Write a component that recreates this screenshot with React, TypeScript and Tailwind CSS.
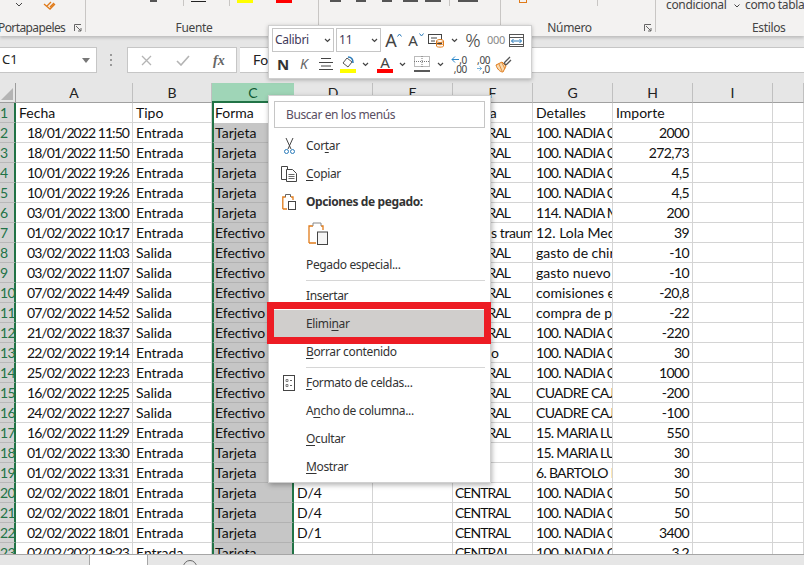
import React from "react";

const rows: string[][] = [
  ["Fecha", "Tipo", "Forma", "", "", "Tienda", "Detalles", "Importe"],
  ["18/01/2022 11:50", "Entrada", "Tarjeta", "", "", "CENTRAL", "100. NADIA C", "2000"],
  ["18/01/2022 11:50", "Entrada", "Tarjeta", "", "", "CENTRAL", "100. NADIA C", "272,73"],
  ["10/01/2022 19:26", "Entrada", "Tarjeta", "", "", "CENTRAL", "100. NADIA C", "4,5"],
  ["10/01/2022 19:26", "Entrada", "Tarjeta", "", "", "CENTRAL", "100. NADIA C", "4,5"],
  ["03/01/2022 13:00", "Entrada", "Tarjeta", "", "", "CENTRAL", "114. NADIA M", "200"],
  ["01/02/2022 10:17", "Entrada", "Efectivo", "", "", "", "12. Lola Med", "39"],
  ["03/02/2022 11:03", "Salida", "Efectivo", "", "", "CENTRAL", "gasto de chir", "-10"],
  ["03/02/2022 11:07", "Salida", "Efectivo", "", "", "CENTRAL", "gasto nuevo", "-10"],
  ["07/02/2022 14:49", "Salida", "Efectivo", "", "", "CENTRAL", "comisiones e", "-20,8"],
  ["07/02/2022 14:52", "Salida", "Efectivo", "", "", "CENTRAL", "compra de p", "-22"],
  ["21/02/2022 18:37", "Salida", "Efectivo", "", "", "CENTRAL", "100. NADIA C", "-220"],
  ["22/02/2022 19:14", "Entrada", "Efectivo", "", "", "", "100. NADIA C", "30"],
  ["25/02/2022 12:23", "Entrada", "Efectivo", "", "", "CENTRAL", "100. NADIA C", "1000"],
  ["16/02/2022 12:25", "Salida", "Efectivo", "", "", "CENTRAL", "CUADRE CAJA", "-200"],
  ["24/02/2022 12:27", "Salida", "Efectivo", "", "", "CENTRAL", "CUADRE CAJA", "-100"],
  ["16/02/2022 11:29", "Entrada", "Efectivo", "", "", "CENTRAL", "15. MARIA LU", "550"],
  ["01/02/2022 13:30", "Entrada", "Tarjeta", "", "", "", "15. MARIA LU", "30"],
  ["01/02/2022 13:31", "Entrada", "Tarjeta", "", "", "", "6. BARTOLO I", "30"],
  ["02/02/2022 18:01", "Entrada", "Tarjeta", "D/4", "", "CENTRAL", "100. NADIA C", "50"],
  ["02/02/2022 18:01", "Entrada", "Tarjeta", "D/4", "", "CENTRAL", "100. NADIA C", "50"],
  ["02/02/2022 18:01", "Entrada", "Tarjeta", "D/1", "", "CENTRAL", "100. NADIA C", "3400"],
  ["02/02/2022 19:23", "Entrada", "Tarjeta", "", "", "CENTRAL", "100. NADIA C", "3,2"],
];

const colHeaders = ["A", "B", "C", "D", "E", "F", "G", "H", "I", ""];

const cell = "h-5 border-r border-b border-[#d4d4d4] overflow-hidden whitespace-nowrap leading-[20px] text-[14px] text-[#111]";

const cellClass = (i: number, j: number, v: string) => {
  let c = cell;
  if (j === 0 && i > 0) c += " text-right pr-[3px] tracking-[-0.95px]";
  else if (j === 7 && i > 0) c += " text-right pr-[3px] tracking-[-0.6px]";
  else if (j === 5) c += " pl-[2px]";
  else c += " pl-[3px]";
  if (j === 5 && i > 0) c += " tracking-[-1px]";
  if (j === 6 && /[A-Z]{2}/.test(v)) c += " tracking-[-0.7px]";
  return c;
};

const Sheet = () => (
  <div className="grid grid-cols-[16px_117px_79px_82px_79px_80px_80px_80px_80px_80px_31px] grid-rows-[20px] auto-rows-[20px] font-['Lato',sans-serif] overflow-hidden h-[471px]">
    <div className="bg-[#e6e6e6] border-b border-r border-[#9c9c9c] flex items-end justify-end pr-[2px] pb-[2px]">
      <svg width={12} height={12} viewBox="0 0 12 12">
        <path d="M12 0V12H0Z" fill="#b4b4b4" />
      </svg>
    </div>
    {colHeaders.map((c, k) => (
      <div
        key={k}
        className={
          c === "C"
            ? "bg-[#9fd5b7] border-b-2 border-[#217346] text-center text-[14px] leading-[19px] text-[#0f5a33]"
            : "bg-[#e6e6e6] border-r border-b border-r-[#c0c0c0] border-b-[#a0a0a0] text-center text-[14px] leading-[19px] text-[#222]"
        }
      >
        {c}
      </div>
    ))}
    {rows.map((r, i) => (
      <React.Fragment key={i}>
        <div className="h-5 bg-[#d2d2d2] border-r-2 border-b border-r-[#217346] border-b-[#b8b8b8] text-left text-[14px] leading-[20px] tracking-[-0.5px] text-[#217346] overflow-hidden">
          {i + 1}
        </div>
        {r.map((v, j) => {
          if (j === 2) {
            return (
              <div
                key={j}
                className={
                  i === 0
                    ? "h-5 bg-white border-x-2 border-[#217346] pl-[1px] text-[14px] leading-[20px] text-[#111] overflow-hidden"
                    : "h-5 bg-[#c6c6c6] border-x-2 border-b border-x-[#217346] border-b-[#b2b2b2] pl-[1px] text-[14px] leading-[20px] text-[#111] overflow-hidden"
                }
              >
                {v}
              </div>
            );
          }
          if (j === 5 && i === 6) {
            return <div key={j} className={cell + " pl-[38px] tracking-[-0.4px]"}>s traum</div>;
          }
          if (j === 5 && i === 12) {
            return <div key={j} className={cell + " pl-[38px]"}>o</div>;
          }
          return (
            <div key={j} className={cellClass(i, j, v)}>
              {v}
            </div>
          );
        })}
        <div className={cell} />
        <div className={cell} />
      </React.Fragment>
    ))}
  </div>
);

const Launcher = ({ cls }: { cls: string }) => (
  <svg className={cls} width={8} height={8} viewBox="0 0 8 8" fill="none" stroke="#666">
    <path d="M.5 7V.5H7M2 2l5 5M4 7h3V4" />
  </svg>
);

const Ribbon = () => (
  <div className="h-[36px] bg-[#f3f2f1] shadow-[0_2px_3px_rgba(0,0,0,0.18)] relative z-10 flex font-['Noto_Sans',sans-serif] text-[12px] tracking-[-0.35px] text-[#444]">
    <div className="w-[86px] shrink-0 border-r border-[#c8c6c4] h-[32px] relative flex items-end">
      <span className="ml-[-2px] -mb-[4px] leading-[16px] tracking-[-0.6px] whitespace-nowrap">Portapapeles</span>
      <Launcher cls="absolute left-[74px] bottom-0" />
      <svg className="absolute left-[15px] top-[2px]" width={8} height={5} viewBox="0 0 8 5" fill="none" stroke="#444">
        <path d="M1 1l3 3 3-3" />
      </svg>
      <svg className="absolute left-[43px] top-0" width={16} height={10} viewBox="0 0 16 10" fill="none" stroke="#e07b1a" strokeWidth={1.3}>
        <path d="M1 4l6 5 5-5M4 6l4-4M7 7l4-4" />
      </svg>
    </div>
    <div className="w-[233px] shrink-0 border-r border-[#c8c6c4] h-[32px] relative flex items-end justify-center pr-[16px]">
      <span className="-mb-[4px] leading-[16px]">Fuente</span>
      <span className="absolute left-[64px] top-0 w-[7px] h-[2px] bg-[#555]" />
      <span className="absolute left-[97px] top-0 h-[6px] w-px bg-[#c8c6c4]" />
      <span className="absolute left-[105px] top-[1px] w-[15px] h-px bg-[#222]" />
      <span className="absolute left-[143px] top-0 h-[6px] w-px bg-[#c8c6c4]" />
      <span className="absolute left-[151px] top-0 w-[16px] h-[3px] bg-[#ffff00]" />
      <span className="absolute left-[190px] top-0 w-[16px] h-[3px] bg-[#ff0000]" />
    </div>
    <div className="w-[182px] shrink-0 border-r border-[#c8c6c4] h-[32px] relative">
      <span className="absolute left-[11px] top-0 w-[11px] h-[2px] bg-[#555]" />
      <span className="absolute left-[37px] top-0 w-[10px] h-[2px] bg-[#555]" />
      <span className="absolute left-[63px] top-0 w-[10px] h-[2px] bg-[#555]" />
      <span className="absolute left-[84px] top-0 w-[15px] h-[2px] bg-[#555]" />
      <span className="absolute left-[106px] top-0 w-[16px] h-[2px] bg-[#555]" />
      <span className="absolute left-[130px] top-0 h-[6px] w-px bg-[#c8c6c4]" />
      <span className="absolute left-[139px] top-0 w-[20px] h-[2px] bg-[#555]" />
    </div>
    <div className="w-[155px] shrink-0 border-r border-[#c8c6c4] h-[32px] relative flex items-end justify-center pr-[17px]">
      <span className="-mb-[4px] leading-[16px]">Número</span>
      <span className="absolute left-[18px] top-0 w-[8px] h-[3px] border-x border-b border-[#e07b1a]" />
      <span className="absolute left-[96px] top-0 h-[6px] w-px bg-[#c8c6c4]" />
      <Launcher cls="absolute right-[3px] bottom-0" />
    </div>
    <div className="flex-1 h-[32px] relative">
      <span className="absolute left-[10px] top-[-3px] whitespace-nowrap leading-[16px]">condicional</span>
      <svg className="absolute left-[78px] top-[4px]" width={6} height={4} viewBox="0 0 6 4" fill="none" stroke="#444">
        <path d="M.5.5L3 3 5.500.5" />
      </svg>
      <span className="absolute left-[89px] top-[-3px] whitespace-nowrap leading-[16px]">como tabla</span>
      <span className="absolute left-[96px] bottom-[-4px] leading-[16px]">Estilos</span>
    </div>
  </div>
);

const FormulaBar = () => (
  <div className="h-[47px] bg-[#e6e6e6] flex items-center pt-px font-['Noto_Sans',sans-serif]">
    <div className="w-[97px] shrink-0 h-[26px] bg-white border border-[#c6c6c6] border-l-0 flex items-center justify-between pl-[2px] pr-[6px] text-[13px] text-[#222]">
      C1
      <svg width={8} height={5} viewBox="0 0 8 5"><path d="M0 0h8L4 5Z" fill="#777" /></svg>
    </div>
    <div className="w-[30px] shrink-0 flex justify-center pr-[2px]">
      <div className="flex flex-col gap-[3px]">
        <span className="w-[2px] h-[2px] bg-[#999]" />
        <span className="w-[2px] h-[2px] bg-[#999]" />
        <span className="w-[2px] h-[2px] bg-[#999]" />
      </div>
    </div>
    <div className="w-[110px] shrink-0 h-[26px] bg-white border border-[#c6c6c6] flex items-center">
      <svg className="ml-[13px]" width={11} height={11} viewBox="0 0 11 11" stroke="#b4b4b4" strokeWidth={1.3}><path d="M1 1l9 9M10 1L1 10" /></svg>
      <svg className="ml-[24px]" width={14} height={11} viewBox="0 0 14 11" fill="none" stroke="#b4b4b4" strokeWidth={1.6}><path d="M1 6l4 4 8-9" /></svg>
      <span className="ml-[23px] font-['Liberation_Serif',serif] italic font-bold text-[14px] text-[#666]">fx</span>
    </div>
    <div className="ml-[3px] flex-1 h-[26px] bg-white border-y border-[#c6c6c6] pl-[13px] text-[14px] leading-[24px] text-[#222] font-['Lato',sans-serif]">
      Forma
    </div>
  </div>
);

const Chevron = () => (
  <svg width={7} height={5} viewBox="0 0 7 5" fill="none" stroke="#444" strokeWidth={1.2} className="shrink-0">
    <path d="M1 1l2.500 2.500L6 1" />
  </svg>
);

const MiniBar = () => (
  <div className="absolute left-[268px] top-[25px] w-[264px] h-[54px] bg-white border border-[#d0d0d0] shadow-[0_1px_4px_rgba(0,0,0,0.25)] z-20 pl-[3px] pt-[2px] font-['Noto_Sans',sans-serif] text-[#444]">
    <div className="flex items-center h-[24px]">
      <div className="w-[62px] h-[24px] shrink-0 border border-[#c6c6c6] flex items-center justify-between px-[2px] text-[12px] tracking-[-0.3px] text-[#3f3a5a]">
        Calibri <Chevron />
      </div>
      <div className="ml-[2px] w-[45px] h-[24px] shrink-0 border border-[#c6c6c6] flex items-center justify-between px-[2px] text-[12px] text-[#3f3a5a]">
        11 <Chevron />
      </div>
      <span className="ml-[4px] w-[12px] text-center text-[18px] leading-none shrink-0">A</span>
      <svg width={5} height={4} viewBox="0 0 5 4" className="mb-[10px] shrink-0" fill="none" stroke="#2a7ab9"><path d="M.5 3.500L2.500 1l2 2.500" /></svg>
      <span className="ml-[6px] w-[10px] text-center text-[15px] leading-none shrink-0">A</span>
      <svg width={5} height={4} viewBox="0 0 5 4" className="ml-px mb-[10px] shrink-0" fill="none" stroke="#2a7ab9"><path d="M.5.5l2 2.500 2-2.500" /></svg>
      <svg className="ml-[4px] shrink-0" width={16} height={15} viewBox="0 0 16 15" fill="none">
        <rect x=".5" y="1.500" width="13" height="9" fill="#fff" stroke="#444" />
        <path d="M.5 1.500h13M3 5h6M3 8h4" stroke="#444" />
        <ellipse cx="12" cy="8" rx="3.500" ry="1.500" fill="#fff" stroke="#e07b1a" />
        <path d="M8.500 8v5c0 1.500 7 1.500 7 0V8M8.500 10.500c0 1.500 7 1.500 7 0" stroke="#e07b1a" />
      </svg>
      <span className="ml-[7px] flex"><Chevron /></span>
      <span className="ml-[7px] w-[16px] text-center text-[19px] font-light leading-none shrink-0">%</span>
      <span className="ml-[6px] w-[16px] text-[11px] tracking-[-0.3px] text-[#888] shrink-0">000</span>
      <svg className="ml-[6px] mt-[1px] shrink-0" width={15} height={13} viewBox="0 0 15 13" fill="none">
        <rect x=".5" y=".5" width="14" height="12" stroke="#555" />
        <path d="M.5 3.500h14M.5 10.500h14" stroke="#555" />
        <path d="M2.500 7h10M4.500 5l-2 2 2 2M10.500 5l2 2-2 2" stroke="#2a7ab9" />
      </svg>
    </div>
    <div className="flex items-center h-[18px] mt-[3px]">
      <span className="ml-[5px] w-[10px] text-[15px] font-bold leading-none text-[#333] shrink-0">N</span>
      <span className="ml-[13px] w-[8px] text-[14px] italic leading-none text-[#666] shrink-0">K</span>
      <svg className="ml-[11px] shrink-0" width={14} height={12} viewBox="0 0 14 12" stroke="#444"><path d="M2 .5h10M0 4.500h14M2 8h10M0 11.500h14" /></svg>
      <svg className="ml-[7px] shrink-0" width={16} height={17} viewBox="0 0 16 17" fill="none">
        <path d="M3 7l4-5 5 4-4 5Z" stroke="#555" />
        <path d="M8 1c3 0 5 2 5 6" stroke="#2a7ab9" strokeWidth={1.5} />
        <rect y="13" width="16" height="4" fill="#ffff00" />
      </svg>
      <span className="ml-[6px] flex"><Chevron /></span>
      <div className="ml-[8px] w-[16px] h-[17px] shrink-0 flex flex-col items-center">
        <span className="text-[15px] leading-[13px] text-[#444]">A</span>
        <span className="w-[16px] h-[4px] bg-[#ff0000]" />
      </div>
      <span className="ml-[6px] flex"><Chevron /></span>
      <svg className="ml-[8px] shrink-0" width={16} height={16} viewBox="0 0 16 16" fill="none">
        <rect x=".5" y=".5" width="15" height="10" stroke="#777" strokeDasharray="1 1" />
        <path d="M8 0v11M0 5.500h16" stroke="#777" strokeDasharray="1 1" />
        <path d="M0 15h16" stroke="#222" strokeWidth={1.5} />
      </svg>
      <span className="ml-[7px] flex"><Chevron /></span>
      <div className="ml-[7px] w-[16px] shrink-0 flex flex-col text-[10px] leading-[8px] tracking-[-0.3px] text-[#444]">
        <div className="flex items-center justify-between">
          <svg width={8} height={7} viewBox="0 0 8 7" fill="none" stroke="#2a86c8"><path d="M8 3.500H1M4 .5l-3 3 3 3" /></svg>
          ,0
        </div>
        <div className="text-right mt-[1px]">,00</div>
      </div>
      <div className="ml-[10px] w-[13px] shrink-0 flex flex-col text-[10px] leading-[8px] tracking-[-0.3px] text-[#444]">
        <div className="text-right mb-[1px]">,00</div>
        <div className="flex items-center justify-between">
          <svg width={8} height={7} viewBox="0 0 8 7" fill="none" stroke="#2a86c8"><path d="M0 3.500h7M4 .5l3 3-3 3" /></svg>
          ,0
        </div>
      </div>
      <svg className="ml-[5px] shrink-0" width={17} height={17} viewBox="0 0 17 17" fill="none">
        <path d="M1 9l6-3 4 4-3 6C5 16 2 13 1 9Z" fill="#f8d9b0" stroke="#e07b1a" />
        <path d="M4 8l3 7M7 7l3 6" stroke="#e07b1a" strokeWidth={0.8} />
        <path d="M9 7l6-6M11 9l5-5M9 7l2 2" stroke="#555" strokeWidth={1.3} />
      </svg>
    </div>
  </div>
);

const U = ({ children }: { children: React.ReactNode }) => <span className="underline underline-offset-2">{children}</span>;

const MenuItem = ({ icon, children, cls }: { icon?: React.ReactNode; children: React.ReactNode; cls?: string }) => (
  <div className={"h-[28px] shrink-0 flex items-center " + (cls || "")}>
    <div className="w-[37px] shrink-0 flex justify-center pl-[3px]">{icon}</div>
    <div className="text-[12px] tracking-[-0.35px] text-[#333] whitespace-nowrap">{children}</div>
  </div>
);

const ContextMenu = () => (
  <div className="absolute left-[268px] top-[95px] w-[223px] h-[388px] bg-white border border-[#d0d0d0] shadow-[1px_2px_5px_rgba(0,0,0,0.3)] z-20 font-['Noto_Sans',sans-serif] pt-[5px] flex flex-col">
    <div className="mx-[5px] h-[27px] border border-[#c6c6c6] pl-[11px] text-[12px] tracking-[-0.4px] leading-[25px] text-[#5a4f63] shrink-0">
      Buscar en los menús
    </div>
    <div className="h-[4px] shrink-0" />
    <MenuItem
      icon={
        <svg width={11} height={16} viewBox="0 0 11 16" fill="none" stroke="#444">
          <path d="M2 0l5 11M9 0L4 11" />
          <circle cx="2.500" cy="13.500" r="2" stroke="#2a7ab9" />
          <circle cx="8.500" cy="13.500" r="2" stroke="#2a7ab9" />
        </svg>
      }
    >
      Cor<U>t</U>ar
    </MenuItem>
    <MenuItem
      icon={
        <svg width={16} height={16} viewBox="0 0 16 16" fill="none" stroke="#444">
          <path d="M5.500 13.500h-5V.5h6v3" />
          <path d="M5.500 3.500h6l4 4v8h-10Z" />
          <path d="M7.500 8.500h6M7.500 10.500h6M7.500 12.500h6" strokeWidth={0.8} />
        </svg>
      }
    >
      <U>C</U>opiar
    </MenuItem>
    <MenuItem
      icon={
        <svg width={14} height={16} viewBox="0 0 14 16" fill="none">
          <path d="M.8 15V3h3M9 3h2v3M.8 15H5" stroke="#e07b1a" strokeWidth={1.3} />
          <path d="M3.500 3V.5h5V3" stroke="#666" />
          <rect x="6.500" y="7.500" width="7" height="8" fill="#fff" stroke="#444" />
        </svg>
      }
    >
      <span className="font-bold tracking-[-0.4px] text-[#333]">Opciones de pegado:</span>
    </MenuItem>
    <div className="h-[35px] pl-[39px] pt-[6px] shrink-0">
      <svg width={21} height={23} viewBox="0 0 21 23" fill="none">
        <path d="M1 21V4h4M13 4h2v4M1 21h7" stroke="#e07b1a" strokeWidth={1.3} />
        <path d="M5 4V1h8v3" stroke="#888" />
        <rect x="9.500" y="10" width="10" height="12.500" fill="#f5f5f5" stroke="#444" />
      </svg>
    </div>
    <MenuItem>Pegado especial...</MenuItem>
    <div className="h-[3px] flex items-center ml-[37px] mr-[5px] shrink-0"><div className="h-px w-full bg-[#d6d6d6]" /></div>
    <MenuItem><U>I</U>nsertar</MenuItem>
    <MenuItem cls="bg-[#d0cecc]">Elimi<U>n</U>ar</MenuItem>
    <MenuItem><U>B</U>orrar contenido</MenuItem>
    <div className="h-[3px] flex items-center ml-[37px] mr-[5px] shrink-0"><div className="h-px w-full bg-[#d6d6d6]" /></div>
    <MenuItem
      icon={
        <svg width={12} height={16} viewBox="0 0 12 16" fill="none" stroke="#444">
          <rect x=".5" y=".5" width="11" height="15" />
          <path d="M3 4.500h2v2H3ZM3 9.500h2v2H3Z" stroke="#666" strokeWidth={0.8} />
          <path d="M7 5.500h2M7 10.500h2" stroke="#666" />
        </svg>
      }
    >
      <U>F</U>ormato de celdas...
    </MenuItem>
    <MenuItem>A<U>n</U>cho de columna...</MenuItem>
    <MenuItem><U>O</U>cultar</MenuItem>
    <MenuItem><U>M</U>ostrar</MenuItem>
  </div>
);

const Tabs = () => (
  <div className="h-[11px] bg-[#e6e6e6] border-t border-[#a6a6a6] flex relative z-10 overflow-hidden">
    <div className="w-[90px] shrink-0 border-r border-[#a6a6a6]" />
    <div className="w-[58px] shrink-0 bg-white border-r border-[#a6a6a6] -mt-px" />
    <div className="ml-[35px] mt-[5px] w-[14px] h-[14px] shrink-0 rounded-full border border-[#666]" />
  </div>
);

export default function App() {
  return (
    <div className="w-[804px] h-[565px] relative overflow-hidden bg-white">
      <Ribbon />
      <FormulaBar />
      <Sheet />
      <Tabs />
      <MiniBar />
      <ContextMenu />
      {/* red highlight drawn over the screenshot */}
      <div className="absolute left-[267px] top-[302px] w-[224px] h-[42px] border-[7px] border-[#ed1c24] z-30" />
    </div>
  );
}
